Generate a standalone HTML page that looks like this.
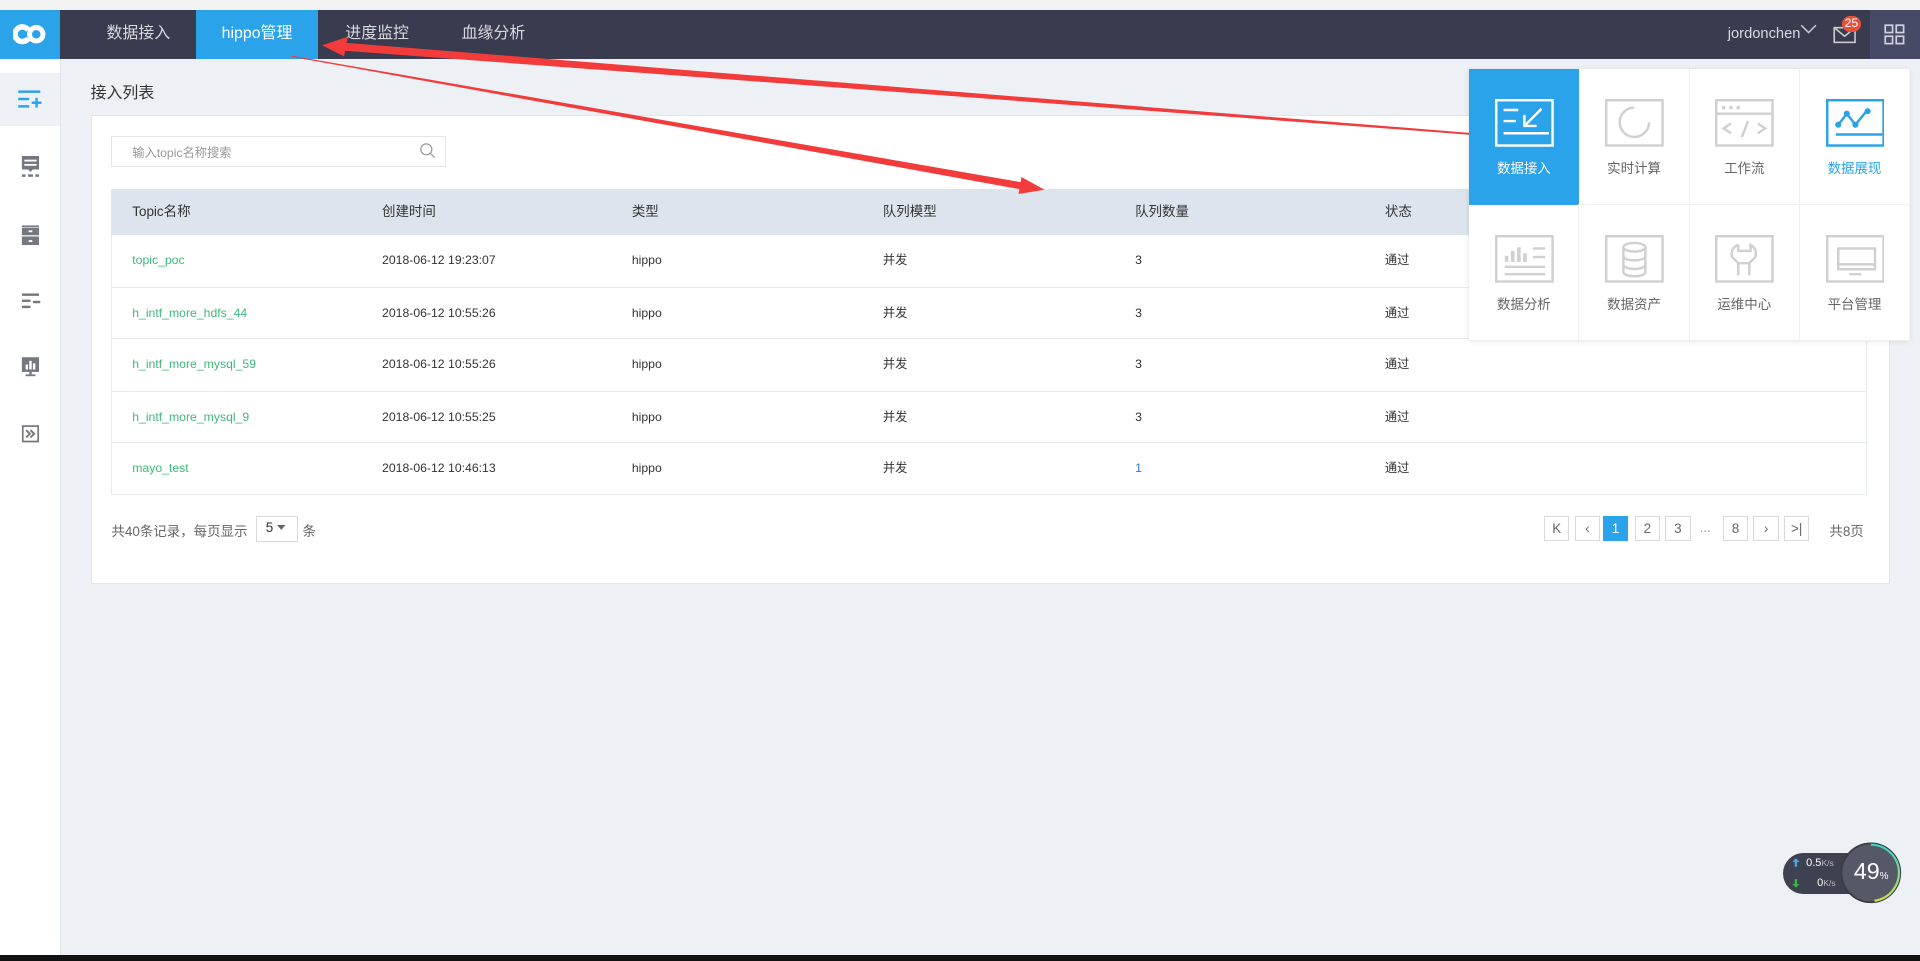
<!DOCTYPE html>
<html><head><meta charset="utf-8">
<style>
html,body{margin:0;padding:0;width:1920px;height:961px;overflow:hidden;background:#edf0f5;}
#w{position:relative;width:1568px;height:785px;zoom:1.22449;font-family:"Liberation Sans","Noto Sans CJK SC",sans-serif;font-size:11px;color:#333;background:#edf0f5;overflow:hidden}
.a{position:absolute}
.nav{left:0;top:8px;width:1568px;height:40px;background:#393b4f}
.nt{position:absolute;top:0;height:40px;line-height:40px;font-size:13px;color:#d8d9de}
.sb{left:0;top:48px;width:49px;height:732px;background:#fff;border-right:1px solid #e2e5ea}
.card{left:74px;top:94px;width:1468px;height:381px;background:#fff;border:1px solid #e2e5ea}
.row{position:absolute;left:91px;width:1434px;border-bottom:1px solid #e8ebf0}
.c{position:absolute;top:0;line-height:42px}
.pb{position:absolute;top:421px;width:19px;height:19px;border:1px solid #d9d9d9;text-align:center;line-height:19px;color:#666;font-size:11px;background:#fff}
.panel{left:1200px;top:56px;width:359px;height:222px;background:#fff;box-shadow:0 1px 4px rgba(0,0,0,.12)}
.cell{position:absolute;width:89px;height:111px;border-right:1px solid #f0f0f0;border-bottom:1px solid #f0f0f0;text-align:center;color:#666;font-size:11px}
.cell svg{position:absolute;left:21px;top:25px}
.cell span{position:absolute;left:0;right:0;top:72px}
</style></head><body><div id="w">
<div class="a" style="left:0;top:0;width:1568px;height:8px;background:#f3f3f3;border-bottom:1px solid #c8c8c8"></div>
<div class="a nav"></div>
<div class="a" style="left:0;top:8px;width:49px;height:40px;background:#2aa3ea"></div>
<svg class="a" style="left:11px;top:18px" width="28" height="20" viewBox="0 0 28 20"><path d="M12.5 6.5A6 6 0 1 0 12.5 13.5" fill="none" stroke="#fff" stroke-width="4.5"/><circle cx="19" cy="10" r="5.5" fill="none" stroke="#fff" stroke-width="4"/></svg>
<div class="a" style="left:160px;top:8px;width:100px;height:40px;background:#2aa3ea"></div>
<div class="a" style="left:0;top:8px;width:1568px;height:40px">
<div class="nt" style="left:87px">数据接入</div>
<div class="nt" style="left:181px;color:#fff">hippo管理</div>
<div class="nt" style="left:282px">进度监控</div>
<div class="nt" style="left:377px">血缘分析</div>
<div class="nt" style="left:1411px;font-size:12px">jordonchen</div>
</div>
<svg class="a" style="left:1470px;top:20px" width="14" height="10"><path d="M1 1l6 6 6-6" fill="none" stroke="#ccc" stroke-width="1.2"/></svg>
<svg class="a" style="left:1497px;top:20px" width="20" height="16"><rect x="1" y="3" width="17" height="12" fill="none" stroke="#ccc" stroke-width="1.3"/><path d="M1 3l8.5 7 8.5-7" fill="none" stroke="#ccc" stroke-width="1.3"/></svg>
<div class="a" style="left:1504px;top:13px;width:16px;height:13px;border-radius:7px;background:#e9503a;color:#fff;font-size:10px;text-align:center;line-height:13px">25</div>
<div class="a" style="left:1527px;top:8px;width:41px;height:40px;background:#474a66"></div>
<svg class="a" style="left:1539px;top:20px" width="18" height="17"><g fill="none" stroke="#cfd1dc" stroke-width="1.4"><rect x="1" y="1" width="6" height="6"/><rect x="10" y="1" width="6" height="6"/><rect x="1" y="10" width="6" height="6"/><rect x="10" y="10" width="6" height="6"/></g></svg>

<div class="a sb"></div>
<div class="a" style="left:0;top:60px;width:49px;height:43px;background:#eef1f6"></div>
<svg class="a" style="left:14px;top:72px" width="22" height="18"><g fill="#2aa3ea"><rect x="1" y="2" width="18" height="2"/><rect x="1" y="8" width="9" height="2"/><rect x="1" y="14" width="9" height="2"/><rect x="12" y="11" width="8" height="2"/><rect x="15" y="8" width="2" height="8"/></g></svg>
<svg class="a" style="left:14px;top:127px" width="22" height="20"><g fill="#76787f"><path d="M4 0h14v11h-5l-2 2-2-2H4z"/><rect x="4" y="15" width="3" height="2"/><rect x="9" y="15" width="4" height="2"/><rect x="15" y="15" width="3" height="2"/></g><g fill="#fff"><rect x="6" y="3" width="10" height="1.5"/><rect x="6" y="6.5" width="10" height="1.5"/></g></svg>
<svg class="a" style="left:14px;top:182px" width="22" height="20"><g fill="#76787f"><rect x="4" y="2" width="14" height="1.5"/><rect x="4" y="4" width="14" height="6"/><rect x="4" y="11" width="14" height="7"/></g><g fill="#fff"><rect x="9.5" y="6" width="3" height="1.5"/><rect x="9.5" y="14" width="3" height="1.5"/></g></svg>
<svg class="a" style="left:14px;top:238px" width="22" height="18"><g fill="#76787f"><rect x="4" y="2" width="14" height="2"/><rect x="4" y="7" width="7" height="2"/><rect x="13" y="8" width="6" height="2"/><rect x="4" y="12" width="7" height="2"/></g></svg>
<svg class="a" style="left:14px;top:291px" width="22" height="20"><rect x="4" y="1" width="14" height="12" fill="#76787f"/><g fill="#fff"><rect x="7" y="7" width="2" height="4"/><rect x="10" y="4" width="2" height="7"/><rect x="13" y="6" width="2" height="5"/></g><rect x="10" y="13" width="2" height="2" fill="#76787f"/><rect x="7" y="15" width="8" height="1.5" fill="#76787f"/></svg>
<svg class="a" style="left:14px;top:346px" width="22" height="20"><rect x="4.7" y="1.7" width="12.6" height="12.6" fill="none" stroke="#76787f" stroke-width="1.4"/><path d="M7.5 5l3 3-3 3M11 5l3 3-3 3" fill="none" stroke="#76787f" stroke-width="1.6"/></svg>
<div class="a" style="left:0;top:780px;width:1568px;height:5px;background:#111"></div>

<div class="a" style="left:74px;top:65px;font-size:13px;color:#333">接入列表</div>
<div class="a card"></div>
<div class="a" style="left:91px;top:111px;width:272px;height:24px;border:1px solid #e2e5ea;background:#fff"></div>
<div class="a" style="left:108px;top:117px;font-size:10px;color:#999">输入topic名称搜索</div>
<svg class="a" style="left:342px;top:116px" width="14" height="14"><circle cx="6" cy="6" r="4.5" fill="none" stroke="#999" stroke-width="1"/><path d="M9.3 9.3l3.5 3.5" stroke="#999" stroke-width="1"/></svg>
<div class="a" style="left:91px;top:154px;width:1434px;height:250px;border:1px solid #e8ebf0;box-sizing:border-box"></div>
<div class="row" style="top:154px;height:38px;background:#dde4ee;border:0">
<div class="c" style="left:17px;line-height:38px;font-size:11px">Topic名称</div><div class="c" style="left:221px;line-height:38px">创建时间</div><div class="c" style="left:425px;line-height:38px">类型</div><div class="c" style="left:630px;line-height:38px">队列模型</div><div class="c" style="left:836px;line-height:38px">队列数量</div><div class="c" style="left:1040px;line-height:38px">状态</div></div>
<div class="row" style="top:192px;height:42px;font-size:10px"><div class="c" style="left:17px;color:#3db978">topic_poc</div><div class="c" style="left:221px">2018-06-12 19:23:07</div><div class="c" style="left:425px">hippo</div><div class="c" style="left:630px">并发</div><div class="c" style="left:836px">3</div><div class="c" style="left:1040px">通过</div></div>
<div class="row" style="top:235px;height:41px;font-size:10px"><div class="c" style="left:17px;color:#3db978">h_intf_more_hdfs_44</div><div class="c" style="left:221px">2018-06-12 10:55:26</div><div class="c" style="left:425px">hippo</div><div class="c" style="left:630px">并发</div><div class="c" style="left:836px">3</div><div class="c" style="left:1040px">通过</div></div>
<div class="row" style="top:277px;height:42px;font-size:10px"><div class="c" style="left:17px;color:#3db978">h_intf_more_mysql_59</div><div class="c" style="left:221px">2018-06-12 10:55:26</div><div class="c" style="left:425px">hippo</div><div class="c" style="left:630px">并发</div><div class="c" style="left:836px">3</div><div class="c" style="left:1040px">通过</div></div>
<div class="row" style="top:320px;height:41px;font-size:10px"><div class="c" style="left:17px;color:#3db978">h_intf_more_mysql_9</div><div class="c" style="left:221px">2018-06-12 10:55:25</div><div class="c" style="left:425px">hippo</div><div class="c" style="left:630px">并发</div><div class="c" style="left:836px">3</div><div class="c" style="left:1040px">通过</div></div>
<div class="row" style="top:362px;height:42px;font-size:10px;border:0"><div class="c" style="left:17px;color:#3db978">mayo_test</div><div class="c" style="left:221px">2018-06-12 10:46:13</div><div class="c" style="left:425px">hippo</div><div class="c" style="left:630px">并发</div><div class="c" style="left:836px;color:#2a7ad0">1</div><div class="c" style="left:1040px">通过</div></div>

<div class="a" style="left:91px;top:425px;color:#666">共40条记录，每页显示</div>
<div class="a" style="left:209px;top:421px;width:33px;height:20px;border:1px solid #d9d9d9;background:#fff"></div>
<div class="a" style="left:217px;top:425px;font-size:11px">5</div>
<svg class="a" style="left:226px;top:429px" width="8" height="5"><path d="M0 0h7l-3.5 4z" fill="#666"/></svg>
<div class="a" style="left:247px;top:425px;color:#666">条</div>
<div class="pb" style="left:1261px">K</div>
<div class="pb" style="left:1286px">&lsaquo;</div>
<div class="pb" style="left:1309px;background:#2aa3ea;border-color:#2aa3ea;color:#fff">1</div>
<div class="pb" style="left:1335px">2</div>
<div class="pb" style="left:1360px">3</div>
<div class="a" style="left:1388px;top:425px;color:#999">...</div>
<div class="pb" style="left:1407px">8</div>
<div class="pb" style="left:1432px">&rsaquo;</div>
<div class="pb" style="left:1457px">&gt;|</div>
<div class="a" style="left:1494px;top:425px;color:#666">共8页</div>

<svg class="a" style="left:0;top:0" width="1568" height="785">
<polygon points="263,37 284,30 283,35 1200,108.5 1200,110 282,41.5 281,46" fill="#f23b3b"/>
<polygon points="853,155 831.8,158.4 832.6,154.5 238,46.3 238.5,45.5 833.5,148.7 834.2,144.6" fill="#f23b3b"/>
</svg>

<div class="a panel">
<div class="cell" style="left:0;top:0;background:#2aa3ea;color:#fff;border-color:#2aa3ea"><svg width="48" height="40"><rect x="1" y="1" width="46" height="37" fill="none" stroke="#fff" stroke-width="2"/><g stroke="#fff" stroke-width="2" fill="none"><path d="M7 9h12M7 18h10M7 28h37M38 8L24 22M24 13v9h10"/></g></svg><span>数据接入</span></div>
<div class="cell" style="left:90px;top:0"><svg width="48" height="40"><rect x="1" y="1" width="46" height="37" fill="none" stroke="#d0d0d0" stroke-width="2"/><path d="M24 7a12 12 0 1 0 12 12" fill="none" stroke="#d0d0d0" stroke-width="2"/></svg><span>实时计算</span></div>
<div class="cell" style="left:180px;top:0"><svg width="48" height="40"><rect x="1" y="1" width="46" height="37" fill="none" stroke="#d0d0d0" stroke-width="2"/><path d="M1 12h46M13 20l-6 4 6 4M35 20l6 4-6 4M27 18l-5 13" fill="none" stroke="#d0d0d0" stroke-width="2"/><g fill="#d0d0d0"><circle cx="7" cy="7" r="1.5"/><circle cx="13" cy="7" r="1.5"/><circle cx="19" cy="7" r="1.5"/></g></svg><span>工作流</span></div>
<div class="cell" style="left:270px;top:0;color:#2aa3ea"><svg width="48" height="40"><rect x="1" y="1" width="46" height="37" fill="none" stroke="#2aa3ea" stroke-width="2"/><path d="M10 21l7-9 7 9 9-11M8 29h38" fill="none" stroke="#2aa3ea" stroke-width="2"/><g fill="#2aa3ea"><circle cx="10" cy="21" r="2.5"/><circle cx="17" cy="12" r="2.5"/><circle cx="24" cy="21" r="2.5"/><circle cx="34" cy="10" r="2.5"/></g></svg><span>数据展现</span></div>
<div class="cell" style="left:0;top:111px"><svg width="48" height="40"><rect x="1" y="1" width="46" height="37" fill="none" stroke="#d0d0d0" stroke-width="2"/><g fill="#d0d0d0"><rect x="8" y="17" width="3" height="5"/><rect x="13" y="13" width="3" height="9"/><rect x="18" y="10" width="3" height="12"/><rect x="23" y="15" width="3" height="7"/><rect x="31" y="10" width="10" height="2"/><rect x="31" y="17" width="10" height="2"/><rect x="8" y="25" width="33" height="2"/><rect x="8" y="31" width="33" height="2"/></g></svg><span>数据分析</span></div>
<div class="cell" style="left:90px;top:111px"><svg width="48" height="40"><rect x="1" y="1" width="46" height="37" fill="none" stroke="#d0d0d0" stroke-width="2"/><g fill="none" stroke="#d0d0d0" stroke-width="2"><ellipse cx="24" cy="10" rx="9" ry="3.5"/><path d="M15 10v20c0 5 18 5 18 0V10M15 17c0 5 18 5 18 0M15 24c0 5 18 5 18 0"/></g></svg><span>数据资产</span></div>
<div class="cell" style="left:180px;top:111px"><svg width="48" height="40"><rect x="1" y="1" width="46" height="37" fill="none" stroke="#d0d0d0" stroke-width="2"/><path d="M19 8v5h10V8c4 2 5 6 4 10l-5 5v10M19 33V23l-5-5c-1-4 0-8 5-10M20 23h8" fill="none" stroke="#d0d0d0" stroke-width="2"/></svg><span>运维中心</span></div>
<div class="cell" style="left:270px;top:111px"><svg width="48" height="40"><rect x="1" y="1" width="46" height="37" fill="none" stroke="#d0d0d0" stroke-width="2"/><rect x="10" y="11" width="30" height="17" fill="none" stroke="#d0d0d0" stroke-width="2"/><path d="M10 24h30M19 32h10" stroke="#d0d0d0" stroke-width="2"/></svg><span>平台管理</span></div>
</div>

<div class="a" style="left:1456px;top:697px;width:80px;height:33px;border-radius:17px;background:#3d4150"></div>
<svg class="a" style="left:1463px;top:700px" width="8" height="26"><path d="M4 1l3 3H5v4H3V4H1z" fill="#4aa8e8"/><path d="M4 25l3-3H5v-4H3v4H1z" fill="#3db04a"/></svg>
<div class="a" style="left:1475px;top:700px;font-size:9px;color:#fff">0.5<span style="font-size:7px;color:#bbb">K/s</span></div>
<div class="a" style="left:1484px;top:716px;font-size:9px;color:#fff">0<span style="font-size:7px;color:#bbb">K/s</span></div>
<svg class="a" style="left:1502px;top:687px" width="52" height="52"><defs><linearGradient id="g" x1="0" y1="0" x2="0" y2="1"><stop offset="0" stop-color="#36d3c5"/><stop offset="1" stop-color="#c9e24a"/></linearGradient></defs><circle cx="26" cy="26" r="24" fill="#545867" stroke="#3a3d48" stroke-width="1.5"/><path d="M26 3A23 23 0 0 1 29 48.8" fill="none" stroke="url(#g)" stroke-width="1.8"/></svg>
<div class="a" style="left:1514px;top:701px;font-size:19px;color:#fff">49<span style="font-size:8px">%</span></div>
</div></body></html>
